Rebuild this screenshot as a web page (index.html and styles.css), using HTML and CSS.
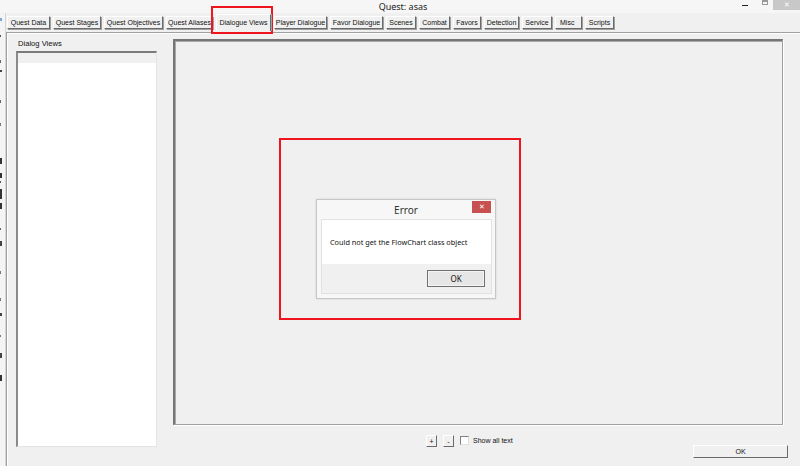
FILE: index.html
```html
<!DOCTYPE html>
<html lang="en">

<head>
    <meta charset="UTF-8">
    <title>Quest: asas</title>
    <link rel="stylesheet" href="styles.css">
</head>

<body>
    <header class="titlebar">
        <span class="title">Quest: asas</span>
        <div class="controls">
            <span class="ctl-min"></span>
            <span class="ctl-max"></span>
            <span class="ctl-close">&#x2715;</span>
        </div>
    </header>

    <div class="frame">
        <!-- bit of the window behind -->
        <div class="backstrip">
            <svg width="3" height="453" viewBox="0 0 3 453">
                <rect x="0" y="5" width="2" height="3" fill="#7aa7d8" />
                <rect x="0" y="22" width="1" height="2" fill="#555" />
                <rect x="0" y="47" width="1" height="3" fill="#666" />
                <rect x="0" y="57" width="2" height="2" fill="#444" />
                <rect x="0" y="87" width="1" height="3" fill="#666" />
                <rect x="0" y="110" width="1" height="3" fill="#777" />
                <rect x="0" y="145" width="2" height="6" fill="#333" />
                <rect x="0" y="160" width="2" height="5" fill="#333" />
                <rect x="0" y="168" width="1" height="2" fill="#555" />
                <rect x="0" y="176" width="2" height="10" fill="#333" />
                <rect x="0" y="190" width="2" height="6" fill="#333" />
                <rect x="0" y="215" width="1" height="2" fill="#666" />
                <rect x="0" y="228" width="2" height="5" fill="#444" />
                <rect x="0" y="258" width="1" height="3" fill="#777" />
                <rect x="0" y="285" width="1" height="3" fill="#777" />
                <rect x="0" y="300" width="2" height="3" fill="#444" />
                <rect x="0" y="322" width="1" height="2" fill="#777" />
                <rect x="0" y="340" width="2" height="5" fill="#444" />
                <rect x="0" y="362" width="2" height="6" fill="#333" />
            </svg>
        </div>

        <div class="main">
            <nav class="tabs">
                <span class="tab">Quest Data</span>
                <span class="tab">Quest Stages</span>
                <span class="tab">Quest Objectives</span>
                <span class="tab">Quest Aliases</span>
                <span class="tab active">Dialogue Views</span>
                <span class="tab">Player Dialogue</span>
                <span class="tab">Favor Dialogue</span>
                <span class="tab">Scenes</span>
                <span class="tab">Combat</span>
                <span class="tab">Favors</span>
                <span class="tab">Detection</span>
                <span class="tab">Service</span>
                <span class="tab tab-misc">Misc</span>
                <span class="tab">Scripts</span>
            </nav>

            <section class="page">
                <div class="views">
                    <div class="views-label">Dialog Views</div>
                    <div class="listbox">
                        <div class="list-head"></div>
                    </div>
                </div>

                <div class="editor">
                    <div class="canvas"></div>
                    <div class="footer">
                        <div class="zoom">
                            <button class="small-btn">+</button>
                            <button class="small-btn">-</button>
                            <label class="check"><span class="box"></span>Show all text</label>
                        </div>
                        <button class="ok-btn">OK</button>
                    </div>
                </div>
            </section>
        </div>
    </div>

    <!-- error popup on top of the canvas -->
    <div class="dialog">
        <div class="dialog-title">
            Error
            <span class="dialog-close">&#x2715;</span>
        </div>
        <div class="dialog-body">
            <div class="dialog-msg">Could not get the FlowChart class object</div>
            <div class="dialog-foot">
                <button class="dialog-ok">OK</button>
            </div>
        </div>
    </div>

    <!-- red highlight marks -->
    <div class="mark mark-tab"></div>
    <div class="mark mark-dialog"></div>
</body>

</html>
```

FILE: styles.css
```css
* {
    box-sizing: border-box;
    padding: 0;
    margin: 0;
}

body {
    width: 800px;
    height: 466px;
    overflow: hidden;
    background: #f0f0f0;
    font-family: 'Liberation Sans', Arial, sans-serif;
    font-size: 7px;
    color: #111;
    display: flex;
    flex-direction: column;
    position: relative;
}

button {
    font-family: inherit;
    font-size: 7px;
    color: #111;
    background: #f0f0f0;
}

/* Title bar */
.titlebar {
    height: 13px;
    background: #f6f6f6;
    position: relative;
    display: flex;
    justify-content: center;
    align-items: center;
}

.title {
    font-family: 'Noto Sans', sans-serif;
    font-size: 9px;
    color: #222;
    line-height: 13px;
    margin-left: 6px;
}

.controls {
    position: absolute;
    right: 0;
    top: 0;
    display: flex;
    align-items: flex-start;
}

.ctl-min {
    width: 6px;
    height: 1px;
    background: #222;
    margin-top: 5px;
    margin-right: 14px;
}

.ctl-max {
    width: 6px;
    height: 5px;
    border: 1px solid #999;
    border-top-width: 2px;
    margin-right: 5px;
}

.ctl-close {
    width: 27px;
    height: 10px;
    background: #c8c8c8;
    color: #fff;
    font-size: 7px;
    line-height: 10px;
    text-align: center;
}

/* Main frame */
.frame {
    flex: 1;
    display: flex;
    min-height: 0;
}

.backstrip {
    width: 6px;
    background: #f4f4f4;
    border-right: 1px solid #d6d6d6;
}

.backstrip svg {
    display: block;
}

.main {
    flex: 1;
    display: flex;
    flex-direction: column;
}

/* Tabs */
.tabs {
    height: 19px;
    padding: 3px 0 0 1px;
    display: flex;
    align-items: flex-start;
    gap: 3px;
}

.tab {
    height: 13px;
    line-height: 11px;
    text-align: center;
    border: 1px solid;
    border-color: #fff #6a6a6a #6a6a6a #fff;
    box-shadow: 1px 1px 0 #a0a0a0;
    white-space: nowrap;
    overflow: hidden;
}

.tab:nth-child(1) { width: 43px; }
.tab:nth-child(2) { width: 48px; }
.tab:nth-child(3) { width: 59px; }
.tab:nth-child(4) { width: 47px; }
.tab:nth-child(5) { width: 55px; }
.tab:nth-child(6) { width: 53px; }
.tab:nth-child(7) { width: 53px; }
.tab:nth-child(8) { width: 30px; }
.tab:nth-child(9) { width: 31px; }
.tab:nth-child(10) { width: 28px; }
.tab:nth-child(11) { width: 35px; }
.tab:nth-child(12) { width: 30px; }
.tab:nth-child(13) { width: 27px; }
.tab:nth-child(14) { width: 29px; }

.tab.active {
    height: 17px;
    margin-top: -2px;
    padding-top: 2px;
    border-bottom: none;
    box-shadow: 1px 0 0 #a0a0a0;
    background: #f0f0f0;
    position: relative;
    z-index: 1;
}

.tab-misc {
    text-align: left;
    padding-left: 4px;
}

/* Tab page */
.page {
    flex: 1;
    border-top: 1px solid #a0a0a0;
    border-left: 1px solid #a0a0a0;
    box-shadow: inset 1px 1px 0 #fff;
    padding: 6px 0 0 9px;
    display: flex;
    gap: 16px;
}

.views {
    width: 141px;
}

.views-label {
    height: 12px;
    line-height: 9px;
    padding-left: 2px;
    font-size: 7.6px;
}

.listbox {
    height: 396px;
    background: #fff;
    border-top: 2px solid #7a7a7a;
    border-left: 2px solid #8a8a8a;
    border-right: 1px solid #e4e4e4;
    border-bottom: 1px solid #e4e4e4;
}

.list-head {
    height: 10px;
    background: #f0f0f0;
}

.editor {
    width: 615px;
    display: flex;
    flex-direction: column;
}

.canvas {
    width: 610px;
    height: 386px;
    background: #f0f0f0;
    border-top: 2px solid #767676;
    border-left: 2px solid #767676;
    border-right: 1px solid #a0a0a0;
    border-bottom: 1px solid #a0a0a0;
    box-shadow: inset 1px 1px 0 #a8a8a8, 1px 1px 0 #fff;
}

.footer {
    display: flex;
    align-items: flex-start;
    margin-top: 10px;
}

.zoom {
    display: flex;
    align-items: center;
    gap: 6px;
    margin-left: 253px;
}

.small-btn {
    width: 11px;
    height: 12px;
    font-size: 7px;
    line-height: 9px;
    border: 1px solid;
    border-color: #fff #6a6a6a #6a6a6a #fff;
}

.check {
    display: flex;
    align-items: center;
    gap: 4px;
    margin-top: -2px;
}

.box {
    width: 9px;
    height: 9px;
    background: #fff;
    border: 1px solid;
    border-color: #808080 #e0e0e0 #e0e0e0 #808080;
}

.ok-btn {
    margin-left: auto;
    margin-top: 10px;
    width: 95px;
    height: 13px;
    line-height: 11px;
    border: 1px solid;
    border-color: #fff #6a6a6a #6a6a6a #fff;
}

/* Error dialog */
.dialog {
    position: absolute;
    left: 316px;
    top: 199px;
    width: 180px;
    height: 100px;
    background: #f7f7f7;
    border: 1px solid #c6c6c6;
    box-shadow: 0 0 2px rgba(0, 0, 0, 0.12);
    font-family: 'Noto Sans', sans-serif;
    display: flex;
    flex-direction: column;
}

.dialog-title {
    height: 19px;
    line-height: 20px;
    text-align: center;
    font-size: 10px;
    color: #333;
    position: relative;
}

.dialog-close {
    position: absolute;
    right: 4px;
    top: 1px;
    width: 19px;
    height: 12px;
    background: #c75050;
    color: #fff;
    font-size: 7px;
    line-height: 12px;
    text-align: center;
}

.dialog-body {
    flex: 1;
    margin: 0 3px 4px 4px;
    border: 1px solid #e2e2e2;
    display: flex;
    flex-direction: column;
}

.dialog-msg {
    height: 44px;
    background: #fff;
    padding-left: 8px;
    line-height: 44px;
    font-size: 7.3px;
    color: #111;
}

.dialog-foot {
    flex: 1;
    background: #f0f0f0;
    display: flex;
    justify-content: flex-end;
    align-items: flex-start;
    padding: 6px 6px 0 0;
}

.dialog-ok {
    width: 58px;
    height: 17px;
    font-family: 'Noto Sans', sans-serif;
    font-size: 8px;
    background: #e6e6e6;
    border: 1px solid #707070;
    box-shadow: inset 0 0 0 1px #f4f4f4;
}

/* Red marks */
.mark {
    position: absolute;
    border: 2px solid #f0141e;
}

.mark-tab {
    left: 211px;
    top: 6px;
    width: 62px;
    height: 28px;
}

.mark-dialog {
    left: 279px;
    top: 138px;
    width: 242px;
    height: 182px;
}
```
